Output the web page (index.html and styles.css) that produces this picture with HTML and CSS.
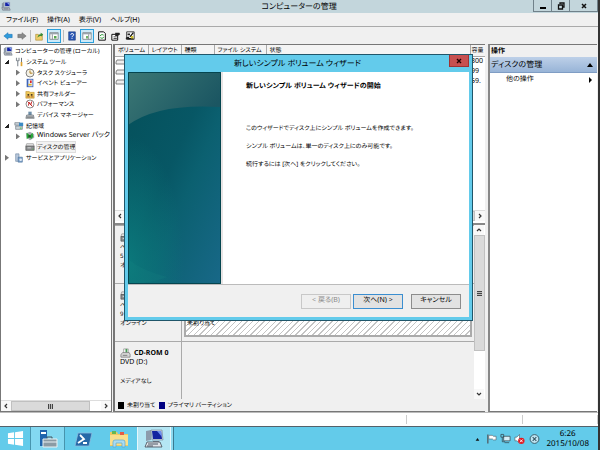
FILE: index.html
```html
<!DOCTYPE html>
<html lang="ja">
<head>
<meta charset="utf-8">
<title>コンピューターの管理</title>
<link rel="stylesheet" href="styles.css">
</head>
<body>
<svg class="defs" aria-hidden="true">
  <symbol id="computer" viewBox="0 0 12 12"><path d="M1 3l3-2v6l-3 1z" fill="#8c98a8"/><path d="M4 1h7v6H4z" fill="#aab6c8"/><path d="M5 2h5v4H5z" fill="#1523a8"/><path d="M7 2l3 0v3z" fill="#7f9cf0"/><path d="M1 8h9l1 3H2z" fill="#c6ccd4" stroke="#4c5664" stroke-width=".6"/><path d="M3 9.500h6" stroke="#4c5664" stroke-width=".8"/></symbol>
  <symbol id="tools" viewBox="0 0 12 12"><path d="M3 1v3l1.500 1L6 4V1M4.500 5v6" fill="none" stroke="#8b929a" stroke-width="1.400"/><path d="M9 1v5" stroke="#6d7882" stroke-width="1.200"/><path d="M8 6h2v5H8z" fill="#e0a32c"/></symbol>
  <symbol id="clock" viewBox="0 0 12 12"><circle cx="6" cy="6" r="4.800" fill="#f4f1e6" stroke="#6c6c6c"/><path d="M6 3v3.200h3" fill="none" stroke="#b08020" stroke-width="1.200"/></symbol>
  <symbol id="events" viewBox="0 0 12 12"><path d="M2 1h8v10H2z" fill="#3d64b8"/><path d="M4 2h5v8H4z" fill="#e9edf6"/><path d="M6 3h2v3H6z" fill="#d22"/><path d="M4 7h4v2H4z" fill="#e3b52d"/></symbol>
  <symbol id="shared" viewBox="0 0 12 12"><path d="M1 3h4l1 1h5v7H1z" fill="#efc75a" stroke="#b58a24" stroke-width=".6"/><path d="M3 6h2v2H3zM7 6h2v2H7z" fill="#4a3b25"/><path d="M2 9h4v1H2zM7 9h3v1H7z" fill="#a5532c"/></symbol>
  <symbol id="perf" viewBox="0 0 12 12"><circle cx="6" cy="6" r="4.800" fill="#fff" stroke="#777"/><path d="M3 3l6 6M4 8l1-4 2 3 1-4" fill="none" stroke="#c52a2a" stroke-width="1.200"/></symbol>
  <symbol id="device" viewBox="0 0 12 12"><path d="M4 2h4v4H4z" fill="#6d8ea8"/><path d="M2 6h8l1 4H1z" fill="#c4c8cc" stroke="#5a6066" stroke-width=".7"/><path d="M2 8.500h8" stroke="#555"/></symbol>
  <symbol id="storage" viewBox="0 0 12 12"><path d="M1 2h6v3H1zM2 6h8v4H2z" fill="#ccd4da" stroke="#5b6872" stroke-width=".7"/><path d="M6 2h5v4H6z" fill="#3d8bc4"/><path d="M7 8h2v1H7z" fill="#2c2"/></symbol>
  <symbol id="backup" viewBox="0 0 12 12"><path d="M1 3l5-2 5 3v4l-5 3-4-3z" fill="#a8adb2"/><path d="M2 2v8l5-4zM6 5l3-3 1 5-3 3z" fill="#26a836"/><path d="M4 5h3v3H4z" fill="#245129"/></symbol>
  <symbol id="disk" viewBox="0 0 12 12"><path d="M2 2h8l1 3H1z" fill="#e4e4e4" stroke="#777" stroke-width=".6"/><path d="M1 5h10v5H1z" fill="#8d9092" stroke="#444" stroke-width=".7"/><path d="M3 7h4" stroke="#ddd"/><path d="M9 8h1v1H9z" fill="#3c3"/></symbol>
  <symbol id="services" viewBox="0 0 12 12"><path d="M2 1h4v9H2z" fill="#b9c9dc" stroke="#67809d" stroke-width=".7"/><path d="M5 5h5v6H5z" fill="#7fa4cc" stroke="#476d96" stroke-width=".7"/><circle cx="8" cy="8" r="1.500" fill="#e6eef7"/></symbol>
  <symbol id="volume" viewBox="0 0 12 6"><path d="M2 1h8l1 2v2H1V3z" fill="#eee" stroke="#666" stroke-width=".8"/><path d="M9 3h2v2H9z" fill="#2da82d"/></symbol>
  <symbol id="cd" viewBox="0 0 12 12"><path d="M4 1h5v5H4z" fill="#fff" stroke="#888" stroke-width=".7"/><path d="M6 1h2v4H6z" fill="#4b9b58"/><path d="M1 7l2-2h7l1 2v3H1z" fill="#d8d8d8" stroke="#666" stroke-width=".7"/><path d="M3 8h5" stroke="#777"/></symbol>
</svg>

<div class="app">
  <header class="titlebar">
    <svg class="app-icon"><use href="#computer"/></svg>
    <h1>コンピューターの管理</h1>
    <div class="window-buttons">
      <button aria-label="最小化"><svg viewBox="0 0 10 8"><path d="M2 5h6v2H2z"/></svg></button>
      <button aria-label="元に戻す"><svg viewBox="0 0 10 8"><path d="M4 2V1h4v4H7M2.500 3h4v4h-4z" fill="none" stroke="#111" stroke-width="1.300"/></svg></button>
      <button class="wide" aria-label="閉じる"><svg viewBox="0 0 10 8"><path d="M3 2l4 4M7 2L3 6" stroke="#111" stroke-width="1.500"/></svg></button>
    </div>
  </header>

  <nav class="menubar">
    <button>ファイル(F)</button><button>操作(A)</button><button>表示(V)</button><button>ヘルプ(H)</button>
  </nav>

  <div class="toolbar">
    <button aria-label="戻る"><svg viewBox="0 0 12 12"><path d="M1 6l5-4v2h5v4H6v2z" fill="#2f9bdc" stroke="#1b6fae" stroke-width=".6"/></svg></button>
    <button aria-label="進む"><svg viewBox="0 0 12 12"><path d="M11 6L6 2v2H1v4h5v2z" fill="#8a8a8a" stroke="#666" stroke-width=".6"/></svg></button>
    <span class="divider"></span>
    <button aria-label="上へ"><svg viewBox="0 0 12 12"><path d="M2 4h3l1 1h4v6H2z" fill="#f0cf6a" stroke="#a78734" stroke-width=".7"/><path d="M4 8c1-3 2-4 4-4V2l3 2-2 3V6C7 6 6 6 4 8z" fill="#3a8a32"/></svg></button>
    <button class="on" aria-label="コンソール ツリー"><svg viewBox="0 0 12 12"><path d="M1 2h10v8H1z" fill="#fff" stroke="#7a8288"/><path d="M1 2h10v2H1z" fill="#9aa4ac"/><path d="M4 4v6" stroke="#7a8288"/><path d="M6 6h3v3H6z" fill="#56a64c"/></svg></button>
    <span class="divider"></span>
    <button aria-label="ヘルプ"><svg viewBox="0 0 12 12"><path d="M2 1h8v10H2z" fill="#2a57b5" stroke="#173577" stroke-width=".7"/><path d="M4.500 4.500c0-2 3.500-2 3.500 0 0 1.500-2 1-2 3M6 8.500v1" fill="none" stroke="#fff" stroke-width="1.200"/></svg></button>
    <button class="on" aria-label="操作ウィンドウ"><svg viewBox="0 0 12 12"><path d="M1 2h10v8H1z" fill="#fff" stroke="#7a8288"/><path d="M1 2h10v2H1z" fill="#9aa4ac"/><path d="M8 4v6" stroke="#7a8288"/><path d="M5 6h2v3H5z" fill="#56a64c"/></svg></button>
    <button aria-label="最新の情報に更新"><svg viewBox="0 0 12 12"><path d="M2 1h6l2 2v8H2z" fill="#fff" stroke="#111" stroke-width="1.200"/><path d="M4 6c0-2 3-2 4-1M8 7c0 2-3 2-4 1" fill="none" stroke="#259b32" stroke-width="1.200"/></svg></button>
    <button aria-label="プロパティ"><svg viewBox="0 0 12 12"><path d="M1 4h7v7H1z" fill="#fff" stroke="#111" stroke-width="1.200"/><path d="M5 2h5l1 2-3 2H5z" fill="#222"/><path d="M3 7h4M3 9h4" stroke="#333"/></svg></button>
    <button aria-label="設定"><svg viewBox="0 0 12 12"><path d="M2 1h9v9H2z" fill="#fff" stroke="#222"/><path d="M3 3h3v2H3zM3 7h2v3H1V8z" fill="#222"/><path d="M10 2L6 7M4 9h6" stroke="#111" stroke-width="1.500"/><path d="M7 6h3v3H7z" fill="#d5c52f"/></svg></button>
  </div>

  <main class="panes">
    <section class="pane tree-pane">
      <ul class="tree">
        <li><svg><use href="#computer"/></svg><span>コンピューターの管理 (ローカル)</span></li>
        <li class="l1"><i class="open"></i><svg><use href="#tools"/></svg><span>システム ツール</span></li>
        <li class="l2"><i class="shut"></i><svg><use href="#clock"/></svg><span>タスク スケジューラ</span></li>
        <li class="l2"><i class="shut"></i><svg><use href="#events"/></svg><span>イベント ビューアー</span></li>
        <li class="l2"><i class="shut"></i><svg><use href="#shared"/></svg><span>共有フォルダー</span></li>
        <li class="l2"><i class="shut"></i><svg><use href="#perf"/></svg><span>パフォーマンス</span></li>
        <li class="l2"><i></i><svg><use href="#device"/></svg><span>デバイス マネージャー</span></li>
        <li class="l1"><i class="open"></i><svg><use href="#storage"/></svg><span>記憶域</span></li>
        <li class="l2"><i class="shut"></i><svg><use href="#backup"/></svg><span class="latin">Windows Server バック</span></li>
        <li class="l2"><i></i><svg><use href="#disk"/></svg><span class="selected">ディスクの管理</span></li>
        <li class="l1"><i class="shut"></i><svg><use href="#services"/></svg><span>サービスとアプリケーション</span></li>
      </ul>
      <div class="hscroll"><button aria-label="左へ"><svg viewBox="0 0 8 8"><path d="M5 2L3 4l2 2"/></svg></button><span class="thumb"><b class="grip"></b></span><span class="track"></span><button aria-label="右へ"><svg viewBox="0 0 8 8"><path d="M3 2l2 2-2 2"/></svg></button></div>
    </section>

    <section class="pane disk-pane">
      <div class="volumes">
        <table>
          <colgroup><col class="c-name"><col class="c-name"><col class="c-name"><col class="c-fs"><col><col class="c-size"></colgroup>
          <thead><tr><th>ボリューム</th><th>レイアウト</th><th>種類</th><th>ファイル システム</th><th>状態</th><th>容量</th></tr></thead>
          <tbody>
            <tr><td><svg><use href="#volume"/></svg></td><td></td><td></td><td></td><td></td><td>300</td></tr>
            <tr><td><svg><use href="#volume"/></svg></td><td></td><td></td><td></td><td></td><td>99</td></tr>
            <tr><td><svg><use href="#volume"/></svg></td><td></td><td></td><td></td><td></td><td>59.</td></tr>
          </tbody>
        </table>
        <div class="hscroll"><button aria-label="左へ"><svg viewBox="0 0 8 8"><path d="M5 2L3 4l2 2"/></svg></button><span class="thumb"></span><button aria-label="右へ"><svg viewBox="0 0 8 8"><path d="M3 2l2 2-2 2"/></svg></button></div>
      </div>
      <div class="graph">
        <div class="disks">
          <div class="disk"><div class="disk-label"><b><svg><use href="#disk"/></svg></b><span>ベ</span><span>5</span><span>オ</span></div><div class="disk-body"></div></div>
          <div class="disk"><div class="disk-label"><b><svg><use href="#disk"/></svg></b><span>ベ</span><span>9</span><span>オンライン</span></div><div class="disk-body"><div class="free"><span>未割り当て</span></div></div></div>
          <div class="disk"><div class="disk-label"><b class="latin"><svg><use href="#cd"/></svg>CD-ROM 0</b><span class="latin">DVD (D:)</span><span></span><span>メディアなし</span></div><div class="disk-body"></div></div>
        </div>
        <div class="vscroll"><button aria-label="上へ"><svg viewBox="0 0 8 8"><path d="M2 5l2-2 2 2"/></svg></button><span class="thumb"><b class="grip"></b></span><span class="track"></span><button aria-label="下へ"><svg viewBox="0 0 8 8"><path d="M2 3l2 2 2-2"/></svg></button></div>
      </div>
      <div class="legend"><i class="black"></i><span>未割り当て</span><i class="navy"></i><span>プライマリ パーティション</span></div>
    </section>

    <aside class="pane actions">
      <h2>操作</h2>
      <button class="group">ディスクの管理<svg viewBox="0 0 6 6"><path d="M0 5l3-4 3 4z"/></svg></button>
      <button class="action">他の操作<svg viewBox="0 0 6 6"><path d="M2 0l3 3-3 3z"/></svg></button>
    </aside>
  </main>

  <footer class="statusbar"><span></span><span></span><span></span></footer>

  <div class="taskbar">
    <button class="start" aria-label="スタート"><svg viewBox="0 0 18 18"><path d="M1 3.500l6.500-1v6H1zM8.500 2.300L17 1v7.500H8.500zM1 9.500h6.500v6L1 14.500zM8.500 9.500H17V17l-8.500-1.300z" fill="#fff"/></svg></button>
    <button class="running" aria-label="サーバー マネージャー"><svg viewBox="0 0 20 20"><path d="M2 1h7v16H2z" fill="#1f64ad"/><path d="M3 3h5v2H3z" fill="#fff"/><path d="M9 10V8h5v2" fill="none" stroke="#44535c"/><path d="M5 10h14v8H5z" fill="#8b9ba4" stroke="#e8f0f3"/><path d="M5 13h14" stroke="#e8f0f3"/></svg></button>
    <button aria-label="PowerShell"><svg viewBox="0 0 20 20"><path d="M5 4h14l-3 13H2z" fill="#2669a8" stroke="#8abce0" stroke-width=".8"/><path d="M7 6l4 4-6 4M10 14h4" fill="none" stroke="#fff" stroke-width="1.800"/></svg></button>
    <button aria-label="エクスプローラー"><svg viewBox="0 0 20 20"><path d="M1 3h7l1 2h10v12H1z" fill="#eec95f"/><path d="M3 2h4v3H3z" fill="#62b955"/><path d="M11 3h4v3h-4z" fill="#e35c46"/><path d="M1 6h18v10H1z" fill="#f9df8d"/><path d="M4 18v-5q0-2 2-2h8q2 0 2 2v5h-3v-4H7v4z" fill="#a9dcf2" stroke="#5ba8cf" stroke-width=".7"/></svg></button>
    <button class="current" aria-label="コンピューターの管理"><svg viewBox="0 0 20 20"><path d="M2 2l5-1v10l-5 1z" fill="#8d9bab"/><path d="M7 1h11l1 10H8z" fill="#c9d3e0" stroke="#6f7d90" stroke-width=".6"/><path d="M8 2h9l1 8H9z" fill="#1422a0"/><path d="M13 2h4l1 6z" fill="#6f90ee"/><path d="M9 12h6v2H9z" fill="#7d8792"/><path d="M3 13h13l2 5H1z" fill="#e0e5ea" stroke="#3f4956" stroke-width=".8"/><path d="M4 15h10M3 17h6" stroke="#4b5563"/></svg></button>
    <div class="tray">
      <svg viewBox="0 0 12 12"><path d="M4 8l2-3 2 3z" fill="#111"/></svg>
      <svg viewBox="0 0 12 12"><path d="M2 1v10" stroke="#53616a" stroke-width="1.500"/><path d="M3 2h4l1 1h3v4H8L7 6H3z" fill="#fff" stroke="#53616a" stroke-width=".7"/></svg>
      <svg viewBox="0 0 12 12"><path d="M4 3h7v5H4z" fill="#d7eef7" stroke="#33434b" stroke-width=".8"/><path d="M1 1h3v3H1zM2.500 4v5h3M5 10h5" fill="none" stroke="#33434b" stroke-width=".8"/></svg>
      <svg viewBox="0 0 12 12"><path d="M1 4h2l3-3v9L3 8H1z" fill="#fff" stroke="#53616a" stroke-width=".7"/><circle cx="8" cy="8" r="3.500" fill="#e11b22"/><path d="M6.500 6.500l3 3M9.500 6.500l-3 3" stroke="#fff"/></svg>
      <svg viewBox="0 0 12 12" class="gap"><circle cx="6" cy="6" r="4.800" fill="#bfe6f4" stroke="#375664"/><path d="M4 4l4 4M8 4L4 8" stroke="#375664" stroke-width="1.200"/></svg>
      <time><span>6:26</span><span>2015/10/08</span></time>
    </div>
  </div>

  <section class="dialog" role="dialog" aria-labelledby="wizard-title">
    <header><h2 id="wizard-title">新しいシンプル ボリューム ウィザード</h2><button class="close" aria-label="閉じる"><svg viewBox="0 0 10 8"><path d="M3 2l4 4M7 2L3 6" stroke="#200" stroke-width="1.400"/></svg></button></header>
    <div class="wizard">
      <div class="page">
        <svg class="banner" viewBox="0 0 93 212" preserveAspectRatio="none">
          <defs>
            <linearGradient id="base" x1="0" y1="0" x2="1" y2="1"><stop offset="0" stop-color="#04505a"/><stop offset=".45" stop-color="#075765"/><stop offset=".6" stop-color="#0b6070"/><stop offset="1" stop-color="#186888"/></linearGradient>
            <linearGradient id="shine" x1="0" y1="0" x2="1" y2=".5"><stop offset="0" stop-color="#3c7875"/><stop offset="1" stop-color="#1b5662"/></linearGradient>
            <radialGradient id="glow" cx="0" cy=".9" r=".6"><stop offset="0" stop-color="#0c8080" stop-opacity=".8"/><stop offset="1" stop-color="#0c8080" stop-opacity="0"/></radialGradient>
          </defs>
          <path d="M0 0h93v212H0z" fill="url(#base)"/><path d="M0 0h93v212H0z" fill="url(#glow)"/>
          <path d="M0 0h93v35Q30 31 0 53z" fill="url(#shine)"/><path d="M0 187q14 12 40 18-20 7-40 7z" fill="#2b9b98" opacity=".1"/>
          <path d="M.5 .5h92v211H.5z" fill="none" stroke="#04454f"/>
        </svg>
        <div class="copy">
          <h3>新しいシンプル ボリューム ウィザードの開始</h3>
          <p>このウィザードでディスク上にシンプル ボリュームを作成できます。</p>
          <p>シンプル ボリュームは、単一のディスク上にのみ可能です。</p>
          <p>続行するには [次へ] をクリックしてください。</p>
        </div>
      </div>
      <div class="buttons"><button disabled>&lt; 戻る(B)</button><button class="default">次へ(N) &gt;</button><button class="cancel">キャンセル</button></div>
    </div>
  </section>
</div>
</body>
</html>
```

FILE: styles.css
```css
* { box-sizing: border-box; }
body, h1, h2, h3, p, ul { margin: 0; padding: 0; }
body {
  font: 7px/10px "Noto Sans", "Noto Sans CJK JP", sans-serif;
  font-feature-settings: "palt";
  text-rendering: geometricPrecision;
  color: #000;
}
button { font: inherit; font-feature-settings: inherit; text-rendering: inherit; color: inherit; border: 0; padding: 0; margin: 0; background: none; }
.defs { position: absolute; width: 0; height: 0; }
.app {
  position: relative;
  display: flex;
  flex-direction: column;
  height: 100vh;
  overflow: hidden;
  background: #f0f0f0;
  border-right: 2px solid #333;
}

.titlebar { display: flex; height: 13px; background: #c3d6dc; }
.app-icon { width: 10px; height: 10px; margin: 1px 0 0 1px; }
.titlebar h1 { flex: 1; font-size: 8px; font-weight: 400; line-height: 14px; text-align: center; padding-left: 54px; }
.window-buttons { display: flex; height: 12px; border: 1px solid #70818a; border-top: 0; }
.window-buttons button { width: 18px; border-right: 1px solid #70818a; }
.window-buttons button.wide { width: 27px; border-right: 0; }
.window-buttons svg { display: block; width: 10px; height: 8px; margin: 1px auto; }

.menubar { display: flex; gap: 9px; height: 14px; padding: 2px 0 0 6px; border-bottom: 1px solid #aaa; }
.toolbar { display: flex; align-items: center; gap: 2px; height: 17px; padding-left: 2px; }
.toolbar button { width: 12px; height: 14px; }
.toolbar svg { display: block; width: 10px; height: 12px; margin: 0 auto; }
.toolbar .on { width: 14px; border: 1px solid #2ba0dc; background: #cdeaf8; }
.toolbar .divider { width: 1px; height: 12px; background: #bbb; }

.panes { flex: 1; min-height: 0; display: grid; grid-template-columns: 112px 1fr 111px; column-gap: 1px; padding-right: 1px; }
.pane { min-width: 0; min-height: 0; display: flex; flex-direction: column; background: #fff; border: 1px solid #777; overflow: hidden; }

.tree, .volumes th, .disk-label, .free, .legend, .copy p { font-size: 6px; }
.tree .latin, .disk-label .latin { font-size: 7px; }

.tree { display: grid; grid-template-rows: repeat(11, 1fr); height: 118px; padding-top: 1px; margin-bottom: auto; list-style: none; }
.tree li { display: flex; align-items: center; padding-left: 2px; white-space: nowrap; }
.tree svg { flex: none; width: 10px; height: 10px; margin-right: 2px; }
.tree .l1 { padding-left: 4px; }
.tree .l2 { padding-left: 15px; }
.tree i { flex: none; width: 9px; height: 6px; }
.tree i.open::before { content: ""; display: block; width: 4px; height: 4px; margin-top: 1px; background: linear-gradient(135deg, transparent 50%, #222 50%); }
.tree i.shut::before { content: ""; display: block; width: 4px; height: 6px; background: #777; clip-path: polygon(0 0, 100% 50%, 0 100%); }
.selected { background: #f2f2f2; outline: 1px solid #ddd; }

.hscroll { display: flex; flex: none; height: 11px; background: #fff; border-top: 1px solid #ddd; }
.hscroll button, .vscroll button { flex: none; width: 10px; height: 10px; background: #f8f8f8; }
.hscroll button svg, .vscroll button svg { display: block; width: 8px; height: 8px; margin: 1px; fill: none; stroke: #333; stroke-width: 1.2; }
.thumb { display: flex; align-items: center; justify-content: center; background: #dadada; border: 1px solid #c0c0c0; }
.hscroll .thumb { flex: 7; }
.hscroll .track { flex: 1; }
.grip { width: 5px; height: 5px; background: repeating-linear-gradient(90deg, #444 0 1px, #bbb 1px 2px); }
.vscroll .grip { background: repeating-linear-gradient(#444 0 1px, #bbb 1px 2px); }

.disk-pane { border-width: 1px 0 1px 2px; }
.volumes { display: flex; flex-direction: column; height: 180px; padding-bottom: 2px; border-bottom: 2px solid #888; }
.volumes table { width: 100%; table-layout: fixed; border-collapse: collapse; margin-bottom: auto; }
.volumes th { height: 11px; padding: 1px 0 0 3px; line-height: 9px; font-weight: 400; text-align: left; white-space: nowrap; overflow: hidden; background: #f4f4f4; border: 0 solid #aaa; border-width: 0 1px 1px 0; }
.volumes td { height: 10px; padding: 0; white-space: nowrap; overflow: hidden; }
.volumes td svg { display: block; width: 12px; height: 6px; }
.volumes td:last-child, .volumes th:last-child { padding-left: 1px; border-right: 0; }
.c-name { width: 33px; }
.c-fs { width: 52px; }
.c-size { width: 15px; }

.graph { flex: 1; min-height: 0; display: flex; background: #f0f0f0; }
.disks { flex: 1; display: grid; grid-template-rows: repeat(3, 1fr); min-width: 0; }
.disk { display: flex; min-height: 0; border-top: 1px solid #aaa; }
.disk-label { width: 67px; padding: 7px 0 0 5px; border-right: 1px solid #aaa; display: flex; flex-direction: column; white-space: nowrap; }
.disk-label > * { display: flex; align-items: center; height: 9px; }
.disk-label svg { width: 11px; height: 11px; margin-right: 3px; }
.disk-body { flex: 1; padding: 1px 2px 4px 2px; }
.free { height: 100%; display: flex; flex-direction: column; justify-content: flex-end; border: 2px solid #aaa; background: repeating-linear-gradient(135deg, #fff 0 3px, #c4c4c4 3px 4px); padding: 0 0 7px 1px; }
.vscroll { display: flex; flex-direction: column; width: 11px; background: #fff; }
.vscroll .thumb { flex: 3; }
.vscroll .track { flex: 1; }
.legend { display: flex; align-items: center; gap: 3px; height: 12px; padding-left: 3px; background: #f0f0f0; }
.legend i { width: 6px; height: 7px; }
.black { background: #000; }
.navy { background: #000080; }

.actions { margin-left: 2px; border-left: 2px solid #888; border-right: 0; }
.actions h2 { height: 12px; padding-left: 1px; font-size: 7px; line-height: 13px; background: #f0f0f0; }
.actions button { display: flex; align-items: center; justify-content: space-between; padding-right: 4px; }
.actions svg { width: 6px; height: 6px; }
.actions .group { height: 16px; padding-left: 1px; font-size: 8px; background: linear-gradient(#bdd0e8, #98b4d7); border-bottom: 1px solid #7f9dc4; }
.actions .action { height: 14px; padding-left: 16px; }

.statusbar { display: grid; grid-template-columns: 407px 1fr 75px; height: 14px; background: #fff; border-top: 1px solid #bbb; }
.statusbar span { margin: 2px 0; border-right: 1px solid #ccc; }

.taskbar { display: flex; height: 24px; background: #63cbea; border-top: 1px solid #54616a; }
.taskbar button { width: 36px; display: flex; align-items: center; justify-content: center; }
.taskbar button svg { width: 20px; height: 20px; }
.taskbar .start { width: 30px; }
.taskbar .start svg { width: 17px; height: 17px; }
.taskbar .running { width: 35px; background: #83d8f1; border: 0 solid #4794ad; border-width: 0 1px; }
.taskbar .current { width: 34px; background: #b4e6f4; border: 0 solid #e6f7fb; border-width: 0 1px; box-shadow: 2px 0 #8ddaf0, 3px 0 #397a90; }
.tray { display: flex; align-items: center; gap: 3px; margin-left: auto; padding-right: 9px; }
.tray svg { width: 11px; height: 12px; }
.tray .gap { margin: 0 3px 0 1px; }
.tray time { display: flex; flex-direction: column; align-items: center; font-size: 8px; }

.dialog { position: absolute; left: 124px; top: 54px; width: 349px; height: 267px; display: flex; flex-direction: column; background: #63cbeb; border: 1px solid #20566a; padding: 0 3px 3px; }
.dialog header { display: flex; height: 17px; }
.dialog header h2 { flex: 1; padding-left: 18px; text-align: center; font-size: 8px; line-height: 18px; font-weight: 400; }
.close { width: 20px; height: 12px; background: #c75050; border: 1px solid #a03232; border-top: 0; }
.close svg { display: block; width: 10px; height: 8px; margin: 1px auto; }
.wizard { flex: 1; min-height: 0; display: flex; flex-direction: column; background: #f0f0f0; }
.page { flex: 1; min-height: 0; display: flex; background: #fff; border-bottom: 1px solid #bbb; }
.banner { width: 93px; height: 100%; }
.copy { flex: 1; padding: 10px 0 0 23px; border-left: 2px solid #e8e4e4; }
.copy h3 { font-size: 7px; line-height: 10px; margin-bottom: 31px; }
.copy p { margin-bottom: 8px; }
.buttons { display: flex; align-items: center; justify-content: flex-end; height: 32px; padding-right: 8px; gap: 2px; }
.buttons button { width: 50px; height: 15px; background: #e2e2e2; border: 1px solid #8c8c8c; }
.buttons button:disabled { background: #efefef; border-color: #c8c8c8; color: #888; }
.buttons .default { border-color: #3b8ed0; }
.buttons .cancel { margin-left: 6px; }
```
